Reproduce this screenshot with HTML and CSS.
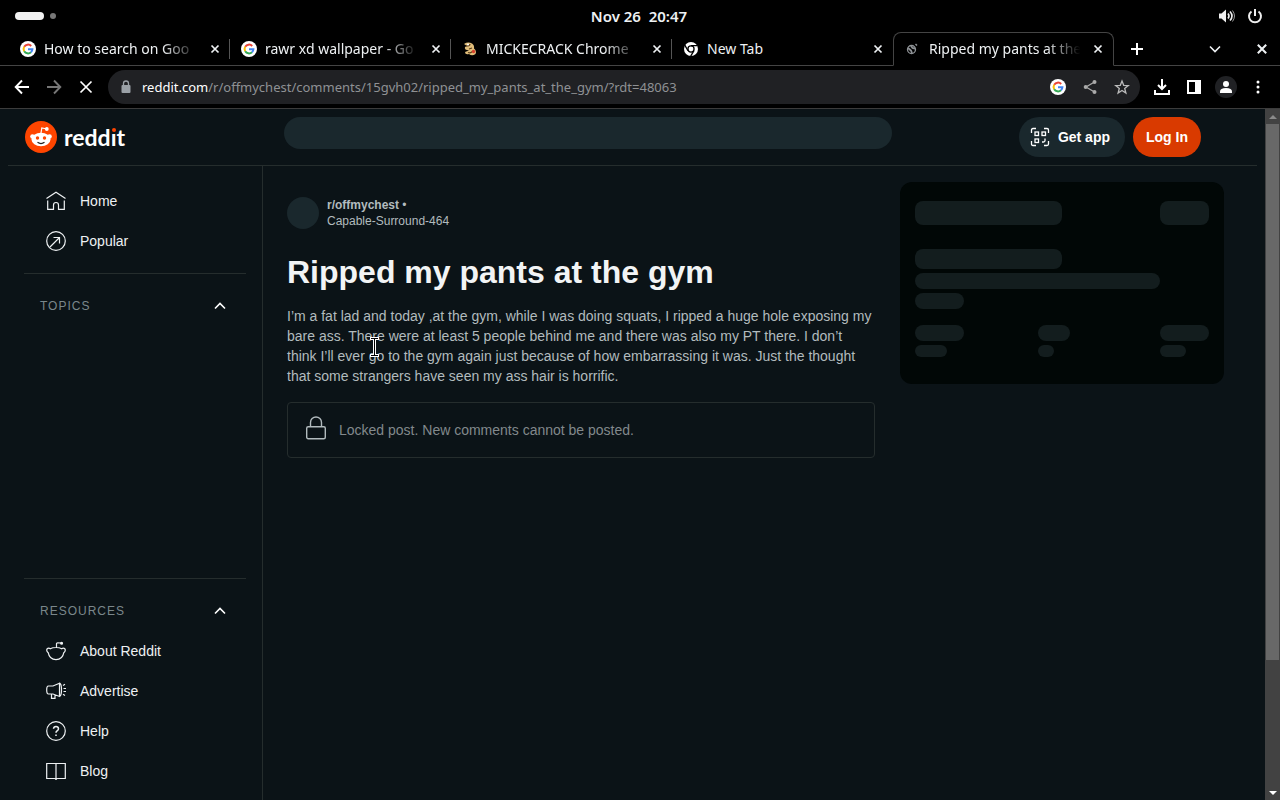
FILE: index.html
```html
<!DOCTYPE html>
<html lang="en">
<head>
<meta charset="utf-8">
<title>Ripped my pants at the gym</title>
<link rel="stylesheet" href="styles.css">
</head>
<body>
<svg class="defs" aria-hidden="true">
  <symbol id="google" viewBox="0 0 16 16">
    <circle cx="8" cy="8" r="8" fill="#fff"/>
    <g fill="none" stroke-width="2">
      <path d="M4.2 5.8A4.4 4.4 0 0 1 11.2 5" stroke="#ea4335"/>
      <path d="M4.2 10.2A4.4 4.4 0 0 1 4.2 5.8" stroke="#fbbc05"/>
      <path d="M11 11.2A4.4 4.4 0 0 1 4.2 10.2" stroke="#34a853"/>
      <path d="M8 8.2H12.4A4.4 4.4 0 0 1 11 11.2" stroke="#4285f4"/>
    </g>
  </symbol>
  <symbol id="close" viewBox="0 0 10 10"><path d="M1.5 1.5l7 7M8.5 1.5l-7 7" stroke="currentColor" stroke-width="1.7"/></symbol>
  <symbol id="chevron" viewBox="0 0 12 12"><path d="M1 8.500l5-5 5 5" fill="none" stroke="currentColor" stroke-width="1.6"/></symbol>
</svg>

<header class="system">
  <div class="spaces"><span class="space-on"></span><span class="space-off"></span></div>
  <time class="clock">Nov 26&nbsp; 20:47</time>
  <div class="status">
    <svg width="18" height="16" viewBox="0 0 18 16"><path d="M1 5.500h2.500L8 1.500v13L3.500 10.500H1z" fill="#eee"/><path d="M10 5.500q2 2.500 0 5M12 3.500q4 4.500 0 9" fill="none" stroke="#eee" stroke-width="1.600"/><path d="M14.500 2.500q4 5.500 0 11" fill="none" stroke="#999"/></svg>
    <svg width="16" height="16" viewBox="0 0 16 16" fill="none" stroke="#eee" stroke-width="2"><path d="M4.500 3.500a6 6 0 1 0 7 0M8 1v7"/></svg>
  </div>
</header>

<nav class="tabs" aria-label="Tabs">
  <div class="tab"><svg width="16" height="16"><use href="#google"/></svg><span class="tab-title">How to search on Goo</span><button class="close" aria-label="Close tab"><svg width="10" height="10"><use href="#close"/></svg></button></div>
  <div class="tab"><svg width="16" height="16"><use href="#google"/></svg><span class="tab-title">rawr xd wallpaper - Go</span><button class="close" aria-label="Close tab"><svg width="10" height="10"><use href="#close"/></svg></button></div>
  <div class="tab"><svg width="16" height="16" viewBox="0 0 16 16"><path d="M2 3Q6 .5 10 2.500Q12.500 4 12 7.500Q15 10 13.500 13Q10 15.500 7 13Q3 14 3 11L7 9.500Q2 9 3 6L5 5Z" fill="#e0bd7a"/><path d="M4 5q4 0 4-2M7 8l3-1M6 11.500q3 1 4-1" stroke="#5a3b16" fill="none" stroke-width="1.200"/><circle cx="6" cy="3.500" r="1" fill="#fff"/><circle cx="11.500" cy="10.500" r="1.700" fill="#d8402c"/></svg><span class="tab-title">MICKECRACK Chrome</span><button class="close" aria-label="Close tab"><svg width="10" height="10"><use href="#close"/></svg></button></div>
  <div class="tab"><svg width="16" height="16" viewBox="0 0 16 16"><circle cx="8" cy="8" r="7" fill="#fff"/><circle cx="8" cy="8" r="3.700" fill="#000"/><circle cx="8" cy="8" r="2.400" fill="#fff"/><path d="M8 4.600h6.500M5 9.700L1.800 4.100M11 9.700L7.700 15.200" stroke="#000" stroke-width="1.300"/></svg><span class="tab-title title-short">New Tab</span><button class="close" aria-label="Close tab"><svg width="10" height="10"><use href="#close"/></svg></button></div>
  <div class="tab tab-active"><svg width="16" height="16" viewBox="0 0 16 16"><circle cx="6.500" cy="8.500" r="4" fill="none" stroke="#8e9296" stroke-width="1.300"/><path d="M3 7l3 2.500 1 2.500M6 5l1.500 2L10 7.500" stroke="#8e9296" stroke-width="1.800" fill="none"/><path d="M10.500 3l1.500 1.500" stroke="#8e9296" stroke-width="1.500"/></svg><span class="tab-title">Ripped my pants at the</span><button class="close" aria-label="Close tab"><svg width="10" height="10"><use href="#close"/></svg></button></div>
  <div class="tab-tools">
    <button aria-label="New tab"><svg width="14" height="14" viewBox="0 0 14 14"><path d="M7 1v12M1 7h12" stroke="#fff" stroke-width="2"/></svg></button>
    <button class="push" aria-label="Search tabs"><svg class="down" width="12" height="12"><use href="#chevron"/></svg></button>
    <button aria-label="Close window"><svg width="12" height="12"><use href="#close"/></svg></button>
  </div>
</nav>

<div class="toolbar">
  <div class="history">
    <button aria-label="Back"><svg width="16" height="16" viewBox="0 0 16 16"><path d="M15 8H2M8 1.500L1.700 8 8 14.500" fill="none" stroke="#fff" stroke-width="1.900"/></svg></button>
    <button aria-label="Forward"><svg width="16" height="16" viewBox="0 0 16 16"><path d="M1 8h13M8 1.500L14.300 8 8 14.500" fill="none" stroke="#777" stroke-width="1.900"/></svg></button>
    <button aria-label="Stop"><svg width="16" height="16" viewBox="0 0 16 16"><path d="M2.500 2.500l11 11M13.500 2.500l-11 11" stroke="#fff" stroke-width="1.700"/></svg></button>
  </div>
  <div class="omnibox">
    <svg width="10" height="14" viewBox="0 0 10 14"><rect x=".5" y="5" width="9" height="8" rx="1" fill="#9aa0a6"/><path d="M2.500 6V3.500a2.500 2.500 0 0 1 5 0V6" fill="none" stroke="#9aa0a6" stroke-width="1.300"/></svg>
    <div class="url"><b>reddit.com</b>/r/offmychest/comments/15gvh02/ripped_my_pants_at_the_gym/?rdt=48063</div>
    <svg width="16" height="16"><use href="#google"/></svg>
    <svg width="16" height="16" viewBox="0 0 16 16"><path d="M12.500 3L4 8l8.500 5" fill="none" stroke="#aaa" stroke-width="1.300"/><g fill="#aaa"><circle cx="12.500" cy="3" r="2"/><circle cx="3.700" cy="8" r="2"/><circle cx="12.500" cy="13" r="2"/></g></svg>
    <svg width="16" height="16" viewBox="0 0 16 16"><path d="M8 2l1.700 4.300 4.600.300-3.600 2.900 1.200 4.500L8 11.500 4.100 14l1.200-4.500L1.700 6.600l4.600-.3z" fill="none" stroke="#bbb" stroke-width="1.300"/></svg>
  </div>
  <div class="actions">
    <svg width="16" height="16" viewBox="0 0 16 16" fill="none" stroke="#fff" stroke-width="2"><path d="M8 0v9.500M4 6l4 4 4-4M1 11v4h14v-4"/></svg>
    <svg width="16" height="16" viewBox="0 0 16 16"><path fill="#fff" fill-rule="evenodd" d="M1 1h14v14H1zM3 3v10h6V3z"/></svg>
    <svg class="profile" width="22" height="22" viewBox="0 0 22 22"><circle cx="11" cy="11" r="11" fill="#202124"/><circle cx="11" cy="8" r="3" fill="#fff"/><path d="M5 17v-1.500q0-3.500 6-3.500t6 3.500V17z" fill="#fff"/></svg>
    <svg width="4" height="16" viewBox="0 0 4 16" fill="#fff"><circle cx="2" cy="3" r="1.500"/><circle cx="2" cy="8" r="1.500"/><circle cx="2" cy="13" r="1.500"/></svg>
  </div>
</div>

<div class="viewport">
  <div class="page">
    <header class="masthead">
      <a class="brand" href="#" aria-label="reddit">
        <svg width="32" height="32" viewBox="0 0 32 32"><circle cx="16" cy="16" r="16" fill="#ff4500"/><g fill="#fff"><circle cx="7.500" cy="15.500" r="2.300"/><circle cx="24.500" cy="15.500" r="2.300"/><ellipse cx="16" cy="18.500" rx="9.500" ry="6.700"/><circle cx="21.800" cy="8" r="1.900"/></g><path d="M16 12l.8-5 5 1" fill="none" stroke="#fff" stroke-width="1.200"/><circle cx="12.500" cy="17" r="1.700" fill="#ff4500"/><circle cx="19.500" cy="17" r="1.700" fill="#ff4500"/><path d="M12.500 21.300q3.500 2.500 7 0" fill="none" stroke="#222" stroke-width="1.200"/></svg>
        <span class="wordmark">redd<span class="dot-i">ı</span>t</span>
      </a>
      <div class="search-ghost"></div>
      <div class="account">
        <button class="pill"><svg width="20" height="20" viewBox="0 0 20 20" fill="none" stroke="#fff" stroke-width="1.300"><path d="M1.500 6V3q0-1.500 1.500-1.500h3M14 1.500h3q1.500 0 1.500 1.500v3M18.500 14v3q0 1.500-1.500 1.500h-3M6 18.500H3Q1.500 18.500 1.500 17v-3M15 11.500v2q0 1.500-1.500 1.500H12"/><rect x="5" y="5" width="3.500" height="3.500"/><rect x="12" y="5" width="3.500" height="3.500"/><rect x="5" y="12" width="3.500" height="3.500"/></svg>Get app</button>
        <button class="pill pill-login">Log In</button>
      </div>
    </header>
    <div class="columns">
      <nav class="sidebar" aria-label="Reddit">
        <a class="item" href="#"><svg viewBox="0 0 20 20"><path d="M.5 7.500L10 1.200l9.500 6.300M1.700 9.500v8.800h5.800v-4.300q0-2.500 2.500-2.500t2.500 2.500v4.300h5.800V9.500"/></svg>Home</a>
        <a class="item" href="#"><svg viewBox="0 0 20 20"><circle cx="10" cy="10" r="9.300"/><path d="M4 16l9.500-9.500M7.500 6.500h6v6"/></svg>Popular</a>
        <section class="group group-topics">
          <button class="group-head">TOPICS<svg width="12" height="12"><use href="#chevron"/></svg></button>
        </section>
        <section class="group">
          <button class="group-head">RESOURCES<svg width="12" height="12"><use href="#chevron"/></svg></button>
          <a class="item" href="#"><svg viewBox="0 0 20 20"><path d="M4.300 7.700Q6.500 6.500 10 6.500t5.700 1.200Q17.500 6.300 19 8q.9 2.200-1.200 3.700Q16.500 18.700 10 18.700T2.200 11.700Q.1 10.200 1 8q1.500-1.700 3.300-.3zM10.500 6.500V2.800q0-1 1-1L15 2"/><circle cx="15.600" cy="2.200" r=".9" fill="#eef1f3"/></svg>About Reddit</a>
          <a class="item" href="#"><svg viewBox="0 0 20 20"><path d="M13.500 2.200L7 5H2.500Q.7 5 .7 9t1.800 4H7l6.500 2.500zM13.500 2.200q2 .5 2 6.600t-2 6.700M5.500 13v4.300H9V14M17 4.500l2-1.200M17.500 7.500H20M17.500 10.500H20M17 13.300l2 1.200"/></svg>Advertise</a>
          <a class="item" href="#"><svg viewBox="0 0 20 20"><circle cx="10" cy="10" r="9.300"/><path d="M7.500 7.800Q7.700 5.500 10 5.500t2.500 2.200Q12.500 9 11 10q-1 .6-1 1.800M10 13.500V15" stroke-width="1.500"/></svg>Help</a>
          <a class="item" href="#"><svg viewBox="0 0 20 20"><path d="M10 2.500H.7v15H8.500q1.500 0 1.500 1.500 0-1.500 1.500-1.500h7.800v-15zM10 2.500V18"/></svg>Blog</a>
        </section>
      </nav>
      <main class="content">
        <article class="post">
          <div class="byline">
            <span class="avatar"></span>
            <div><div><a class="sub" href="#">r/offmychest</a> •</div><div>Capable-Surround-464</div></div>
          </div>
          <h1>Ripped my pants at the gym</h1>
          <p>I’m a fat lad and today ,at the gym, while I was doing squats, I ripped a huge hole exposing my bare ass. There were at least 5 people behind me and there was also my PT there. I don’t think I’ll ever go to the gym again just because of how embarrassing it was. Just the thought that some strangers have seen my ass hair is horrific.</p>
          <div class="locked"><svg width="20" height="24" viewBox="0 0 20 24"><rect x=".7" y="10.700" width="18.600" height="12" rx="1.500"/><path d="M4.500 10.500V6.500a5.500 5.500 0 0 1 11 0v4"/></svg>Locked post. New comments cannot be posted.</div>
          <svg class="cursor" width="9" height="20" viewBox="0 0 9 20"><path d="M0 1.500h9M0 18.500h9M4.500 1v18" stroke="#fff" stroke-width="3"/><path d="M1 1.500h7M1 18.500h7M4.500 1v18" stroke="#000" stroke-width="1"/></svg>
        </article>
        <aside class="card" aria-hidden="true">
          <div class="row"><i class="bone h24 w147"></i><i class="bone h24 w49"></i></div>
          <div class="about"><i class="bone h20 w147"></i><i class="bone h16 w245"></i><i class="bone h16 w49"></i></div>
          <div class="stats">
            <div><i class="bone h16 w49"></i><i class="bone h12 w32"></i></div>
            <div><i class="bone h16 w32"></i><i class="bone h12 w16"></i></div>
            <div><i class="bone h16 w49"></i><i class="bone h12 w26"></i></div>
          </div>
        </aside>
      </main>
    </div>
  </div>
  <div class="scrollbar" aria-hidden="true"><span class="arrow arrow-up"></span><span class="thumb"></span><span class="arrow arrow-down"></span></div>
</div>
</body>
</html>
```
FILE: styles.css
```css
* { box-sizing: border-box; }
body {
  margin: 0;
  height: 100vh;
  display: flex;
  flex-direction: column;
  overflow: hidden;
  background: #000;
  color: #eef1f3;
  font: 14px/20px "Liberation Sans", Arial, sans-serif;
}
button { border: 0; padding: 0; background: none; color: inherit; font: inherit; }
a { color: inherit; text-decoration: none; }
svg { display: block; flex: none; }
.defs { position: absolute; width: 0; height: 0; }

.system {
  display: grid;
  grid-template-columns: 1fr auto 1fr;
  align-items: center;
  height: 32px;
  padding: 0 17px 0 15px;
  font: 600 15px/20px "Noto Sans", sans-serif;
}
.spaces { display: flex; align-items: center; gap: 6px; }
.space-on { width: 29px; height: 8px; border-radius: 4px; background: #f2f2f2; }
.space-off { width: 6px; height: 6px; border-radius: 50%; background: #777; }
.status { display: flex; justify-content: flex-end; gap: 11px; }

.tabs {
  display: flex;
  height: 34px;
  padding-left: 9px;
  border-bottom: 1px solid #444;
  font: 14px/20px "Noto Sans", sans-serif;
}
.tab {
  display: flex;
  align-items: center;
  flex: 0 1 221px;
  min-width: 0;
  padding: 0 10px 0 11px;
}
.tab-title {
  flex: 1;
  min-width: 0;
  margin: 0 8px;
  overflow: hidden;
  white-space: nowrap;
  mask-image: linear-gradient(to right, #000 75%, transparent 97%);
}
.title-short { mask-image: none; }
.tab:nth-child(-n+3) { background: linear-gradient(#555, #555) right center / 1px 20px no-repeat; }
.tab-active { height: 34px; border: 1px solid #444; border-bottom-color: #000; border-radius: 8px 8px 0 0; background: #000; }
.tab-tools { display: flex; align-items: center; flex: 1; gap: 35px; padding: 0 12px 0 16px; }
.push { margin-left: auto; }
.down { transform: rotate(180deg); }

.toolbar {
  display: flex;
  align-items: center;
  height: 43px;
  padding: 0 20px 0 14px;
  border-bottom: 1px solid #3c3c3c;
  font: 13px/20px "Noto Sans", sans-serif;
}
.history { display: flex; gap: 16px; padding-right: 14px; }
.omnibox {
  display: flex;
  align-items: center;
  flex: 1;
  gap: 16px;
  height: 34px;
  padding: 0 10px 0 13px;
  border-radius: 17px;
  background: #202124;
}
.url { flex: 1; margin-left: -5px; color: #8f9194; white-space: nowrap; }
.url b { color: #fff; font-weight: 400; }
.actions { display: flex; align-items: center; gap: 16px; padding-left: 14px; }
.profile { margin: 0 3px 0 -3px; }

.viewport { display: flex; flex: 1; min-height: 0; }
.page { display: flex; flex-direction: column; flex: 1; min-width: 0; padding: 0 8px; background: #0b1317; }
.masthead {
  display: grid;
  grid-template-columns: 243px minmax(0, 608px) 1fr;
  align-items: center;
  gap: 16px;
  height: 57px;
  padding: 0 56px 0 17px;
  border-bottom: 1px solid #252d2d;
}
.brand { display: flex; align-items: center; gap: 7px; }
.wordmark { font: 700 23px/32px Lato, sans-serif; color: #fff; }
.dot-i { position: relative; }
.dot-i::before { content: ""; position: absolute; left: 1px; top: 5px; width: 4px; height: 4px; border-radius: 50%; background: #ff4500; }
.search-ghost { height: 32px; margin-bottom: 8px; border-radius: 16px; background: #1a282d; }
.account { display: flex; justify-content: flex-end; gap: 8px; }
.pill { display: flex; align-items: center; gap: 8px; height: 40px; padding: 0 15px 0 11px; border-radius: 20px; background: #1a282d; color: #fff; font-weight: 700; white-space: nowrap; }
.pill-login { padding: 0 13px; background: #d93a00; }

.columns { display: flex; flex: 1; min-height: 0; }
.sidebar { flex: 0 0 255px; padding: 15px 16px; border-right: 1px solid #252d2d; overflow: hidden; }
.item { display: flex; align-items: center; gap: 14px; height: 40px; padding-left: 22px; }
.item svg { width: 20px; height: 20px; fill: none; stroke: #eef1f3; stroke-width: 1.2; }
.group { margin-top: 12px; padding-top: 12px; border-top: 1px solid #252d2d; }
.group-topics { height: 293px; }
.group-head { display: flex; align-items: center; justify-content: space-between; width: 100%; height: 40px; padding: 0 20px 0 16px; color: #7a878b; font-size: 12px; letter-spacing: 1px; }
.group-head svg { color: #fff; }

.content { display: flex; flex: 1; align-items: flex-start; gap: 25px; min-width: 0; padding: 16px 33px 0 24px; }
.post { position: relative; flex: 1; min-width: 0; padding-top: 15px; color: #b2bbbe; }
.byline { display: flex; align-items: center; gap: 8px; font-size: 12px; line-height: 16px; }
.sub { font-weight: 700; }
.avatar { width: 32px; height: 32px; border-radius: 50%; background: #1a282d; }
h1 { margin: 23px 0 14px; color: #f2f4f5; font-size: 32px; line-height: 40px; }
p { margin: 0; padding-right: 2px; }
.locked { display: flex; align-items: center; gap: 13px; height: 56px; margin-top: 16px; padding: 0 18px; border: 1px solid #252d2d; border-radius: 4px; color: #82898c; }
.locked svg { fill: none; stroke: #b2bbbe; stroke-width: 1.4; margin-bottom: 4px; }
.cursor { position: absolute; left: 83px; top: 155px; }

.card { flex: 0 0 324px; padding: 19px 15px 27px; border-radius: 12px; background: #010706; }
.row { display: flex; justify-content: space-between; }
.bone { display: block; border-radius: 8px; background: #131d1e; }
.about { display: grid; gap: 4px; margin: 24px 0 16px; }
.stats { display: grid; grid-template-columns: 1fr 1fr 49px; }
.stats > div { display: grid; gap: 4px; }
.h24 { height: 24px; } .h20 { height: 20px; } .h16 { height: 16px; } .h12 { height: 12px; }
.w16 { width: 16px; } .w26 { width: 26px; } .w32 { width: 32px; } .w49 { width: 49px; } .w147 { width: 147px; } .w245 { width: 245px; }

.scrollbar { display: flex; flex-direction: column; flex: 0 0 15px; padding: 0 1px; background: #424242; }
.arrow { display: grid; place-items: center; height: 15px; }
.arrow::before { content: ""; border: 4px solid transparent; }
.arrow-up::before { border-top: 0; border-bottom-color: #8a8a8a; }
.arrow-down::before { border-bottom: 0; border-top-color: #fff; }
.thumb { height: 536px; background: #686868; }
.arrow-down { margin-top: auto; }
```
